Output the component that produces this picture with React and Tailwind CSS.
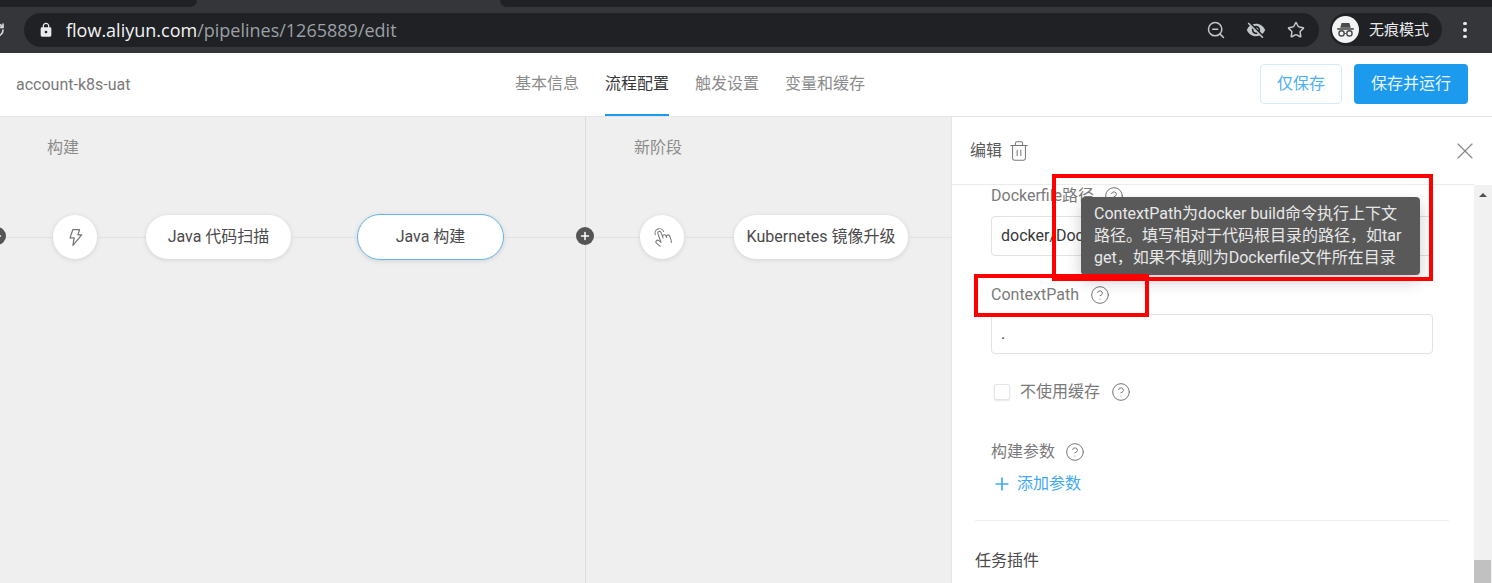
import React from "react";
import { Trash2, X, CircleHelp, Plus, ZoomOut, Star, RotateCw } from "lucide-react";
import { MdLock, MdVisibilityOff } from "react-icons/md";
import { PiHandTapLight } from "react-icons/pi";

const font = "font-['Roboto','Noto_Sans_CJK_SC',sans-serif]";

function Line({ className }) {
    return <div className={`h-px bg-[#e2e2e2] ${className}`} />;
}

function Pill({ label, className }) {
    return (
        <div className={`flex h-[44px] items-center justify-center rounded-[22px] bg-white text-[16px] text-[#4a4a4a] shadow-[0_1px_5px_rgba(0,0,0,0.12)] ${className}`}>
            {label}
        </div>
    );
}

function RoundNode({ children }) {
    return (
        <div className="flex h-[44px] w-[44px] shrink-0 items-center justify-center rounded-full bg-white text-[#777] shadow-[0_1px_5px_rgba(0,0,0,0.12)]">
            {children}
        </div>
    );
}

function AddDot({ className }) {
    return (
        <div className={`absolute flex h-[18px] w-[18px] items-center justify-center rounded-full bg-[#555] text-white ${className}`}>
            <Plus size={12} strokeWidth={3} />
        </div>
    );
}

function Help() {
    return <CircleHelp size={20} strokeWidth={1.2} className="shrink-0 text-[#777]" />;
}

function Browser() {
    return (
        <div className="h-[53px] shrink-0 bg-[#35363a] font-['Open_Sans','Noto_Sans_CJK_SC',sans-serif]">
            <div className="flex h-[7px]">
                <div className="w-[197px] rounded-br-lg bg-[#202124]" />
                <div className="w-[303px]" />
                <div className="flex-1 rounded-bl-lg bg-[#202124]" />
            </div>
            <div className="flex h-[46px] items-start pt-[6px]">
                <div className="w-[24px] overflow-hidden">
                    <RotateCw size={16} strokeWidth={2.5} className="-ml-[11px] mt-[9px] text-[#d5d5d5]" />
                </div>
                <div className="flex h-[34px] w-[1295px] items-center rounded-[17px] bg-[#202124] pl-[14px] pr-[14px]">
                    <MdLock size={16} className="text-[#e8eaed]" />
                    <div className="ml-[12px] text-[18px] leading-none">
                        <span className="text-[#f1f3f4]">flow.aliyun.com</span>
                        <span className="text-[#9aa0a6]">/pipelines/1265889/edit</span>
                    </div>
                    <ZoomOut size={20} strokeWidth={1.8} className="ml-auto text-[#c4c7c9]" />
                    <MdVisibilityOff size={20} className="ml-[20px] text-[#c4c7c9]" />
                    <Star size={18} strokeWidth={2} className="ml-[21px] text-[#c4c7c9]" />
                </div>
                <div className="ml-[11px] flex h-[33px] w-[112px] items-center rounded-[17px] bg-[#202124] pl-[2px]">
                    <div className="flex h-[27px] w-[27px] items-center justify-center rounded-full bg-[#f1f3f4]">
                        <svg width="21" height="21" viewBox="0 0 24 24" fill="#4a4a4a">
                            <path d="M7.5 4.5h9l1.5 5.5H6z" />
                            <rect x="2.5" y="10.5" width="19" height="1.8" />
                            <circle cx="7.5" cy="16.5" r="3" fill="none" stroke="#4a4a4a" strokeWidth="1.6" />
                            <circle cx="16.5" cy="16.5" r="3" fill="none" stroke="#4a4a4a" strokeWidth="1.6" />
                            <path d="M10.5 16h3v1h-3z" />
                        </svg>
                    </div>
                    <span className="ml-[10px] text-[15px] text-[#e8eaed]">无痕模式</span>
                </div>
                <div className="ml-[21px] flex h-[34px] flex-col items-center justify-center gap-[3px]">
                    <span className="h-[3.5px] w-[3.5px] rounded-full bg-[#e8eaed]" />
                    <span className="h-[3.5px] w-[3.5px] rounded-full bg-[#e8eaed]" />
                    <span className="h-[3.5px] w-[3.5px] rounded-full bg-[#e8eaed]" />
                </div>
            </div>
        </div>
    );
}

function Header() {
    const tabs = ["基本信息", "流程配置", "触发设置", "变量和缓存"];
    return (
        <div className="flex h-[64px] shrink-0 items-center border-b border-[#e5e5e5] bg-white">
            <div className="w-[515px] pl-[16px] text-[16px] text-[#7a7a7a]">account-k8s-uat</div>
            <div className="flex h-full gap-[26px]">
                {tabs.map((t, i) => (
                    <div
                        key={t}
                        className={`flex items-center border-b-2 text-[16px] ${
                            i === 1 ? "border-[#1b9aee] text-[#383838]" : "border-transparent text-[#8c8c8c]"
                        }`}
                    >
                        {t}
                    </div>
                ))}
            </div>
            <div className="ml-auto flex gap-[12px] pb-[1px] pr-[24px]">
                <button className="h-[40px] w-[82px] rounded-[4px] border border-[#d2ecfc] bg-white text-[16px] text-[#4cb0f2]">仅保存</button>
                <button className="h-[40px] w-[114px] rounded-[4px] bg-[#1b9aee] text-[16px] text-[#e9f5fd]">保存并运行</button>
            </div>
        </div>
    );
}

function Canvas() {
    return (
        <div className="relative flex w-[951px] shrink-0 bg-[#efefef]">
            <div className="w-[586px] shrink-0 border-r border-[#dcdcdc] pt-[20px]">
                <div className="pl-[47px] text-[16px] leading-[22px] text-[#8c8c8c]">构建</div>
                <div className="mt-[55px] flex h-[46px] items-center">
                    <Line className="w-[53px]" />
                    <RoundNode>
                        <svg width="20" height="20" viewBox="0 0 24 24" fill="none" stroke="currentColor" strokeWidth="1.5" strokeLinejoin="round">
                            <path d="M9.5 3h8l-2 6.5h4.5L9.5 22l1.5-9H6z" />
                        </svg>
                    </RoundNode>
                    <Line className="w-[49px]" />
                    <Pill label="Java 代码扫描" className="w-[145px]" />
                    <Line className="w-[66px]" />
                    <Pill label="Java 构建" className="h-[46px] w-[147px] rounded-[23px] border border-[#62b5f0]" />
                    <Line className="flex-1" />
                </div>
            </div>
            <div className="flex-1 pt-[20px]">
                <div className="pl-[48px] text-[16px] leading-[22px] text-[#8c8c8c]">新阶段</div>
                <div className="mt-[55px] flex h-[46px] items-center">
                    <Line className="w-[54px]" />
                    <RoundNode>
                        <PiHandTapLight size={22} className="-rotate-[20deg]" />
                    </RoundNode>
                    <Line className="w-[50px]" />
                    <Pill label="Kubernetes 镜像升级" className="w-[174px]" />
                    <Line className="flex-1" />
                </div>
            </div>
            <AddDot className="left-[-12px] top-[110px]" />
            <AddDot className="left-[576px] top-[110px]" />
        </div>
    );
}

function Panel() {
    return (
        <div className="flex min-w-0 flex-1 flex-col border-l border-[#e5e5e5] bg-white">
            <div className="mr-[18px] flex h-[68px] shrink-0 items-center border-b border-[#ebebeb] pl-[18px]">
                <span className="text-[16px] text-[#5a5a5a]">编辑</span>
                <Trash2 size={22} strokeWidth={1.1} className="ml-[6px] text-[#777]" />
            </div>
            <div className="flex min-h-0 flex-1">
                <div className="min-w-0 flex-1 overflow-hidden pl-[23px] pr-[25px] text-[16px] text-[#7a7a7a]">
                    <div className="pl-[16px] pr-[16px]">
                        <div className="flex h-[22px] items-center gap-[10px] leading-[22px]">
                            Dockerfile路径 <Help />
                        </div>
                        <div className="mt-[9px] flex h-[40px] items-center rounded-[4px] border border-[#e2e2e2] px-[9px] text-[#383838]">
                            docker/Dockerfile
                        </div>
                        <div className="mt-[28px] flex h-[22px] items-center gap-[11px]">
                            ContextPath <Help />
                        </div>
                        <div className="mt-[8px] flex h-[40px] items-center rounded-[4px] border border-[#e2e2e2] px-[9px] text-[#383838]">
                            .
                        </div>
                        <div className="mt-[27px] flex h-[22px] items-center pl-[3px]">
                            <span className="h-[16px] w-[16px] rounded-[2px] border border-[#e5e5e5] bg-white shadow-[0_1px_2px_rgba(0,0,0,0.1)]" />
                            <span className="ml-[10px] mr-[11px]">不使用缓存</span>
                            <Help />
                        </div>
                        <div className="mt-[38px] flex h-[22px] items-center gap-[10px]">
                            构建参数 <Help />
                        </div>
                        <div className="mt-[10px] flex h-[22px] items-center pl-[1px] text-[#3fa9f2]">
                            <Plus size={20} strokeWidth={2} />
                            <span className="ml-[5px]">添加参数</span>
                        </div>
                    </div>
                    <div className="mt-[25px] h-px bg-[#efefef]" />
                    <div className="mt-[29px] leading-[22px] text-[#4a4a4a]">任务插件</div>
                </div>
                <div className="relative w-[18px] shrink-0 bg-[#f1f1f1]">
                    <div className="absolute left-[5px] top-[8px] h-0 w-0 border-x-[4px] border-b-[4px] border-x-transparent border-b-[#505050]" />
                    <div className="absolute bottom-0 left-0 h-[23px] w-[17px] bg-[#c1c1c1]" />
                </div>
            </div>
        </div>
    );
}

export default function App() {
    return (
        <div className={`relative flex h-[583px] w-[1492px] flex-col overflow-hidden bg-white ${font}`}>
            <Browser />
            <Header />
            <div className="flex min-h-0 flex-1">
                <Canvas />
                <Panel />
            </div>
            <button className="absolute left-[1451px] top-[137px] text-[#8a8a8a]">
                <X size={28} strokeWidth={1} />
            </button>
            <div className="absolute left-[1081px] top-[197px] w-[339px] whitespace-nowrap rounded-[4px] bg-[#595959] px-[13px] py-[6px] text-[16px] leading-[22px] text-[#e8e8e8] shadow-[0_6px_16px_rgba(0,0,0,0.2)]">
                ContextPath为docker build命令执行上下文
                <br />
                路径。填写相对于代码根目录的路径，如tar
                <br />
                get，如果不填则为Dockerfile文件所在目录
            </div>
            <div className="pointer-events-none absolute left-[1052px] top-[174px] h-[107px] w-[381px] border-[4px] border-[#ff0000]" />
            <div className="pointer-events-none absolute left-[974px] top-[274px] h-[43px] w-[175px] border-[4px] border-[#ff0000]" />
        </div>
    );
}
